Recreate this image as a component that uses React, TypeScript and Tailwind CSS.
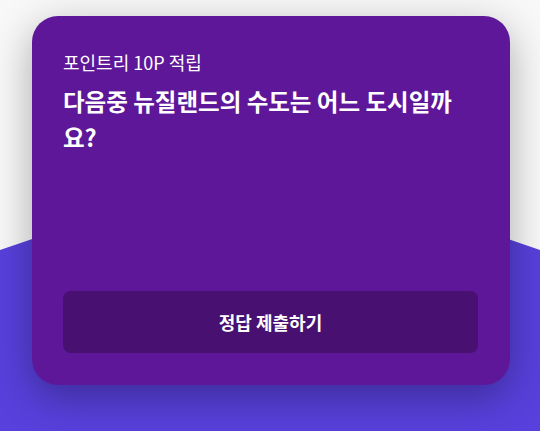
import React from "react";

const QuizCard: React.FC = () => {
  return (
    <div className="relative z-10 ml-[32px] mt-[16px] flex h-[369px] w-[478px] flex-col rounded-[26px] bg-[#5e1799] pt-[34px] pr-[32px] pb-[32px] pl-[31px] shadow-[0_12px_40px_rgba(0,0,0,0.32)]">
      <p className="text-[18px] leading-6 text-white">포인트리 10P 적립</p>
      <h2 className="mt-[9px] text-[23.5px] font-bold leading-[36px] text-white">
        다음중 뉴질랜드의 수도는 어느 도시일까 요?
      </h2>
      <button className="mt-auto h-[62px] w-full rounded-lg bg-[#481071] text-[18px] font-bold text-white">
        정답 제출하기
      </button>
    </div>
  );
};

export default function App() {
  return (
    <div
      className="relative h-[431px] w-[540px] overflow-hidden bg-[#f8f8f8]"
      style={{ fontFamily: '"Noto Sans CJK KR", "Noto Sans", sans-serif' }}
    >
      <div className="absolute inset-0 bg-[#5840dc] [clip-path:polygon(0_250px,270px_158px,540px_250px,540px_431px,0_431px)]" />
      <QuizCard />
    </div>
  );
}
